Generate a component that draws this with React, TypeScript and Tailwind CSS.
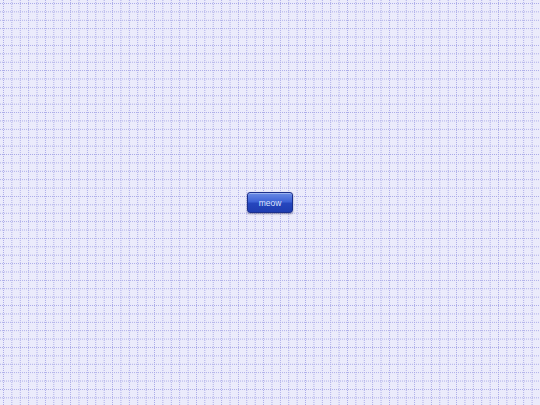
export default function App() {
  return (
    <div className="w-[540px] h-[405px] flex items-center justify-center bg-[#ebebfb] bg-[image:conic-gradient(from_270deg_at_1px_1px,#aaaae8_90deg,transparent_0),conic-gradient(from_270deg_at_1px_1px,#aaaae8_90deg,transparent_0)] bg-[size:8.4px_2px,2px_8.4px] bg-[position:3px_0,0_3px]">
      <button className="w-[46px] h-[21px] pt-px rounded-[3px] border border-[#1b2f8c] bg-[linear-gradient(to_bottom,#6b8ce6_0%,#3f63d6_45%,#2546bd_55%,#1f3db0_100%)] shadow-[0_1px_2px_rgba(0,0,40,0.4),inset_0_1px_0_rgba(255,255,255,0.35)] text-[8.5px] text-[#dfe6ff] font-['Liberation_Sans',sans-serif] leading-none">
        meow
      </button>
    </div>
  );
}
